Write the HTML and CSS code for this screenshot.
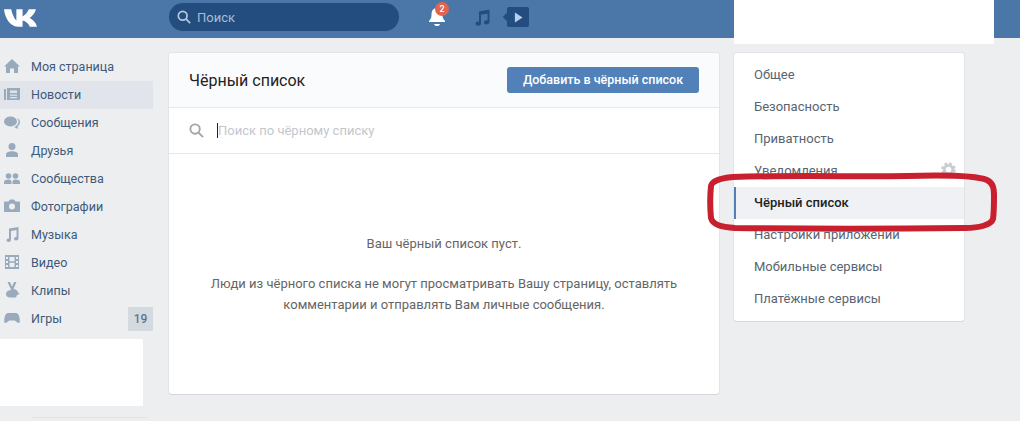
FILE: index.html
```html
<!DOCTYPE html>
<html lang="ru">
<head>
    <meta charset="UTF-8">
    <title>Чёрный список</title>
    <link rel="stylesheet" href="styles.css">
</head>
<body>
    <div class="topbar">
        <svg class="logo" viewBox="0 0 32 18"><path d="M0 1H7C8 6 10 10 12 12V1H18V8C20 7 23 4 24 1H31C30 5 27 8 25 9.5C28 11 31 14 32 18H25C24 15 21 12.5 18 12V18H14C7 18 1 11 0 1Z"/></svg>
        <div class="topSearch">
            <svg viewBox="0 0 16 16"><circle cx="6.5" cy="6.5" r="5"/><path d="M10.2 10.2L15 15"/></svg>
            <span>Поиск</span>
        </div>
        <div class="bell">
            <svg viewBox="0 0 18 20"><path d="M9 1C5 1 3.5 4 3.5 8C3.5 11 2.5 12.5 1 14V15H17V14C15.5 12.5 14.5 11 14.5 8C14.5 4 13 1 9 1Z"/><path d="M6 17H12C11.5 18.500 10.500 19 9 19C7.500 19 6.500 18.500 6 17Z"/></svg>
            <span class="bellCount">2</span>
        </div>
        <svg class="note" viewBox="0 0 16 17"><path d="M5 2.500L15.500 0.500V13C15.500 14.500 14 15.500 12.500 15.500C11 15.500 10 14.800 10 13.500C10 12.200 11.200 11.300 12.500 11.300C12.900 11.300 13.200 11.300 13.500 11.500V4.500L7 5.800V14.500C7 15.800 5.500 16.800 4 16.800C2.500 16.800 1.500 16 1.500 14.800C1.500 13.500 2.800 12.600 4 12.600C4.400 12.600 4.700 12.700 5 12.800Z"/></svg>
        <div class="videoBtn">
            <svg viewBox="0 0 10 12"><path d="M1 0.500L9.500 6L1 11.500Z"/></svg>
        </div>
    </div>

    <div class="whiteTop"></div>

    <div class="page">
        <div class="side">
            <div class="sideItem">
                <svg viewBox="0 0 16 16"><path d="M8 1L16 8.500H14V15H10V10.500H6V15H2V8.500H0Z"/></svg>
                <span>Моя страница</span>
            </div>
            <div class="sideItem sideActive">
                <svg viewBox="0 0 16 16"><path d="M0 3H2V14H1C0.400 14 0 13.500 0 13ZM3 2H16V13C16 13.500 15.600 14 15 14H3ZM6 4.500V7H13V4.500ZM6 8.500V9.700H13V8.500ZM6 11V12.200H13V11Z" fill-rule="evenodd"/></svg>
                <span>Новости</span>
            </div>
            <div class="sideItem">
                <svg viewBox="0 0 16 16"><ellipse cx="6.500" cy="7.500" rx="6.500" ry="5"/><path d="M13 4C15 5 16 6.500 16 8.300C16 10 15 11.500 13.500 12.300C13.500 13 14 14 14.500 14.500C13 14.500 11.500 14 10.500 13C12.500 12 14.500 10.500 14.500 7.800C14.500 6.300 14 5 13 4Z"/></svg>
                <span>Сообщения</span>
            </div>
            <div class="sideItem">
                <svg viewBox="0 0 16 16"><circle cx="8" cy="4.500" r="3.500"/><path d="M2 15V12.500C2 10.500 5 9.300 8 9.300C11 9.300 14 10.500 14 12.500V15Z"/></svg>
                <span>Друзья</span>
            </div>
            <div class="sideItem">
                <svg viewBox="0 0 16 16"><circle cx="4.500" cy="6" r="2.800"/><circle cx="11.500" cy="6" r="2.800"/><path d="M0 14V12C0 10.300 2.200 9.500 4.500 9.500C6.800 9.500 7.500 10.500 7.500 12V14ZM8.500 14V12C8.500 10.500 9.200 9.500 11.500 9.500C13.800 9.500 16 10.300 16 12V14Z"/></svg>
                <span>Сообщества</span>
            </div>
            <div class="sideItem">
                <svg viewBox="0 0 16 16"><path d="M1 3.500H4.500L6 1.500H10L11.500 3.500H15C15.600 3.500 16 4 16 4.500V13C16 13.600 15.600 14 15 14H1C0.400 14 0 13.600 0 13V4.500C0 4 0.400 3.500 1 3.500ZM8 5.500A3 3 0 1 0 8 11.500A3 3 0 1 0 8 5.500Z" fill-rule="evenodd"/></svg>
                <span>Фотографии</span>
            </div>
            <div class="sideItem">
                <svg viewBox="0 0 16 16"><path d="M5 2.500L14.500 1V12.300C14.500 13.800 13.200 14.500 12 14.500C10.800 14.500 10 13.800 10 12.800C10 11.600 11.200 11 12.500 11V4L7 5V14C7 15.300 5.700 16 4.500 16C3.300 16 2.500 15.300 2.500 14.300C2.500 13 3.800 12.400 5 12.500Z"/></svg>
                <span>Музыка</span>
            </div>
            <div class="sideItem">
                <svg viewBox="0 0 16 16"><path d="M1 1H15V15H1ZM2 3V5H4V3ZM2 7V9H4V7ZM2 11V13H4V11ZM12 3V5H14V3ZM12 7V9H14V7ZM12 11V13H14V11ZM5.500 3V7.300H10.500V3ZM5.500 8.700V13H10.500V8.700Z" fill-rule="evenodd"/></svg>
                <span>Видео</span>
            </div>
            <div class="sideItem">
                <svg viewBox="0 0 16 16"><path d="M3.500 0H6L8 4.500L10 0H12.500L9.500 7C11.500 7 13 8 13.500 9.500L15.500 12L13 13L12 15.500H6C3.500 15.500 2 14 2 12C2 10 3.500 8.500 5.500 8.200H6.500L7 7.500Z"/></svg>
                <span>Клипы</span>
            </div>
            <div class="sideItem">
                <svg viewBox="0 0 16 16"><path d="M4.500 3H11.500C14 3 15 5 15.500 8C16 11 16 13 14.500 13C13 13 12 10.500 10.500 10.500H5.500C4 10.500 3 13 1.500 13C0 13 0 11 0.500 8C1 5 2 3 4.500 3Z"/></svg>
                <span>Игры</span>
                <b class="sideCount">19</b>
            </div>
            <div class="whiteSide"></div>
            <div class="sideLine"></div>
        </div>

        <div class="card">
            <div class="cardHead">
                <h2>Чёрный список</h2>
                <div class="addBtn">Добавить в чёрный список</div>
            </div>
            <div class="cardSearch">
                <svg viewBox="0 0 16 16"><circle cx="6.500" cy="6.500" r="5"/><path d="M10.200 10.200L15 15"/></svg>
                <i class="caret"></i>
                <span>Поиск по чёрному списку</span>
            </div>
            <div class="empty">
                <p>Ваш чёрный список пуст.</p>
                <p>Люди из чёрного списка не могут просматривать Вашу страницу, оставлять<br>комментарии и отправлять Вам личные сообщения.</p>
            </div>
        </div>

        <div class="menu">
            <div class="menuItem">Общее</div>
            <div class="menuItem">Безопасность</div>
            <div class="menuItem">Приватность</div>
            <div class="menuItem">Уведомления
                <svg class="gear" viewBox="0 0 16 16"><circle cx="8" cy="8" r="4.500"/><circle class="gearTeeth" cx="8" cy="8" r="6.500"/></svg>
            </div>
            <div class="menuItem menuActive">Чёрный список</div>
            <div class="menuItem">Настройки приложений</div>
            <div class="menuItem">Мобильные сервисы</div>
            <div class="menuItem">Платёжные сервисы</div>
        </div>
    </div>

    <svg class="redMark" viewBox="0 0 292 64"><path d="M4 14C5 9 14 6 26 5C90 3 150 5 200 4C235 3 268 3 280 8C286 11 287 16 287 24C287 32 287 40 286 47C284 53 272 56 258 56C180 57 100 57 28 56C14 55 6 53 4 46C3 36 3 24 4 14Z"/></svg>
</body>
</html>
```

FILE: styles.css
```css
* {
    padding: 0;
    margin: 0;
    box-sizing: border-box;
}
body {
    height: 421px;
    overflow: hidden;
    background-color: #edeef0;
    font-family: Roboto, "Liberation Sans", sans-serif;
    font-size: 12.5px;
    position: relative;
}

/* шапка */
.topbar {
    height: 38px;
    padding-bottom: 4px;
    background-color: #4a76a8;
    display: flex;
    align-items: center;
}
.logo {
    width: 33px;
    height: 19px;
    margin: 0 0 0 4px;
    fill: #fff;
}
.topSearch {
    width: 230px;
    height: 28px;
    margin-left: 132px;
    border-radius: 14px;
    background-color: #234d7f;
    display: flex;
    align-items: center;
    padding-left: 8px;
    color: #a7bcd3;
    font-size: 13px;
}
.topSearch svg {
    width: 14px;
    height: 14px;
    margin-right: 6px;
    fill: none;
    stroke: #b4c7dc;
    stroke-width: 2;
}
.bell {
    width: 18px;
    height: 20px;
    margin-left: 29px;
    position: relative;
}
.bell svg {
    display: block;
    width: 18px;
    height: 20px;
    fill: #fff;
}
.bellCount {
    position: absolute;
    left: 7px;
    top: -5px;
    width: 14px;
    height: 14px;
    border-radius: 50%;
    background-color: #e0644f;
    color: #fff;
    font-size: 9px;
    font-weight: 500;
    line-height: 14px;
    text-align: center;
}
.note {
    width: 16px;
    height: 17px;
    margin-left: 28px;
    fill: #234d7f;
}
.videoBtn {
    width: 22px;
    height: 20px;
    margin-left: 17px;
    border-radius: 2px;
    background-color: #234d7f;
    display: flex;
    align-items: center;
    justify-content: center;
    position: relative;
}
.videoBtn:before {
    content: "";
    position: absolute;
    left: -3px;
    top: 7px;
    width: 6px;
    height: 6px;
    background-color: #234d7f;
    transform: rotate(45deg);
}
.videoBtn svg {
    width: 9px;
    height: 11px;
    fill: #b5d0ee;
}

/* белые закрашенные места */
.whiteTop {
    position: absolute;
    left: 734px;
    top: 0;
    width: 260px;
    height: 44px;
    background-color: #fff;
}
.whiteSide {
    width: 143px;
    height: 67px;
    margin-top: 6px;
    background-color: #fff;
}
.sideLine {
    height: 1px;
    margin: 11px 6px 0 32px;
    background-color: #dfe2e6;
}

.page {
    display: flex;
    align-items: flex-start;
    padding-top: 15px;
}

/* левое меню */
.side {
    width: 153px;
    margin-right: 16px;
}
.sideItem {
    height: 28px;
    padding: 0 0 2px 4px;
    display: flex;
    align-items: center;
    color: #3d5a78;
}
.sideItem svg {
    width: 16px;
    height: 16px;
    margin-right: 11px;
    fill: #99aabd;
}
.sideActive {
    background-color: #e1e5eb;
}
.sideCount {
    height: 24px;
    width: 25px;
    margin: 2px 0 0 auto;
    background-color: #d5dae1;
    color: #5b7492;
    font-size: 12px;
    font-weight: 500;
    line-height: 24px;
    text-align: center;
}

/* центральный блок */
.card {
    width: 550px;
    height: 341px;
    background-color: #fff;
    border-radius: 3px;
    box-shadow: 0 1px 0 0 #d7d8db, 0 0 0 1px #e3e4e8;
}
.cardHead {
    height: 55px;
    padding: 0 20px;
    background-color: #fafbfc;
    border-bottom: 1px solid #e7e8ec;
    border-radius: 3px 3px 0 0;
    display: flex;
    align-items: center;
    justify-content: space-between;
}
.cardHead h2 {
    font-size: 16px;
    font-weight: 400;
    color: #222;
}
.addBtn {
    width: 192px;
    height: 26px;
    margin-top: -1px;
    border-radius: 3px;
    background-color: #5181b8;
    color: #fff;
    font-weight: 500;
    line-height: 26px;
    text-align: center;
}
.cardSearch {
    height: 46px;
    padding-left: 20px;
    border-bottom: 1px solid #e7e8ec;
    display: flex;
    align-items: center;
    color: #c3c7cc;
    font-size: 13px;
}
.cardSearch svg {
    width: 15px;
    height: 15px;
    margin-right: 13px;
    fill: none;
    stroke: #a3a5a8;
    stroke-width: 2;
}
.caret {
    width: 1px;
    height: 15px;
    background-color: #222;
}
.empty {
    padding-top: 79px;
    color: #656565;
    font-size: 13px;
    line-height: 21px;
    text-align: center;
}
.empty p {
    margin-bottom: 19px;
}

/* правое меню */
.menu {
    width: 230px;
    height: 268px;
    margin-left: 15px;
    padding-top: 6px;
    background-color: #fff;
    border-radius: 3px;
    box-shadow: 0 1px 0 0 #d7d8db, 0 0 0 1px #e3e4e8;
    font-size: 13px;
}
.menuItem {
    height: 32px;
    padding-left: 20px;
    color: #5a6470;
    line-height: 32px;
    position: relative;
}
.menuActive {
    border-left: 2px solid #5181b8;
    padding-left: 18px;
    background-color: #eff1f5;
    color: #222;
    font-weight: 500;
}
.gear {
    position: absolute;
    right: 8px;
    top: 7px;
    width: 15px;
    height: 15px;
    fill: none;
    stroke: #c9cdd3;
    stroke-width: 3;
}
.gearTeeth {
    stroke-width: 2.500;
    stroke-dasharray: 3 2.100;
}

/* красная обводка */
.redMark {
    position: absolute;
    left: 707px;
    top: 172px;
    width: 292px;
    height: 64px;
    fill: none;
    stroke: #c8202f;
    stroke-width: 6;
}
```
